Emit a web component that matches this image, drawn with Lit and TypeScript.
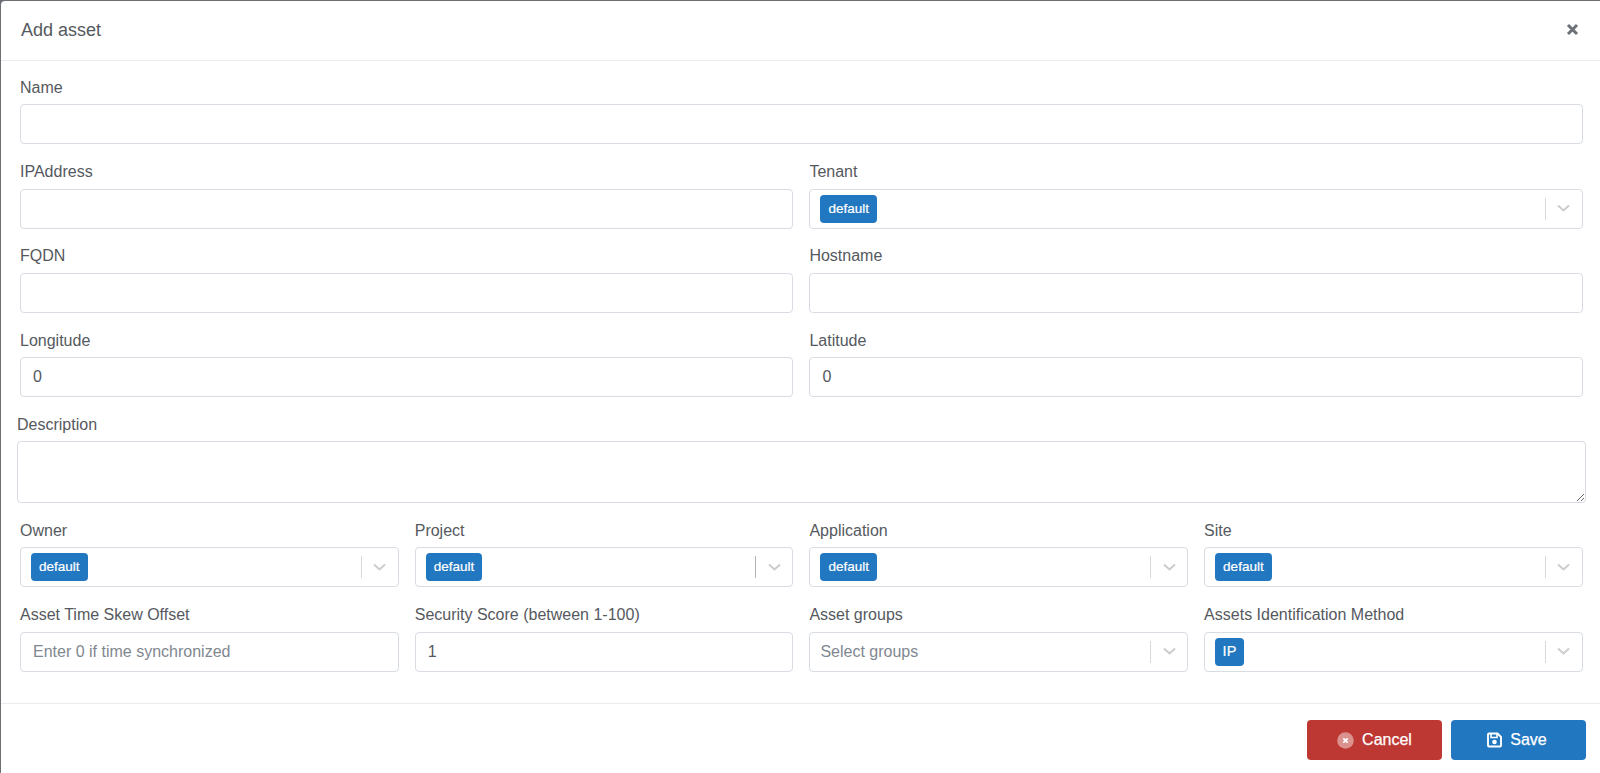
import { LitElement, html, css, svg } from "lit";
import { customElement } from "lit/decorators.js";

const chevron = svg`<path d="M1 1.5l5.5 5 5.5-5" fill="none" stroke="#cccccc" stroke-width="2"/>`;

@customElement("app-root")
export class AppRoot extends LitElement {
  static styles = css`
    :host {
      display: block;
      height: 773px;
      overflow: hidden;
      background: #6b6e72;
      font-family: "Liberation Sans", Arial, sans-serif;
      font-size: 16px;
      color: #55595e;
      box-sizing: border-box;
      padding: 1px 0 0 1px;
    }
    * { box-sizing: border-box; }
    .modal { background: #fff; height: 772px; border-radius: 4px 0 0 0; }
    .header {
      height: 60px;
      border-bottom: 1px solid #e9ecef;
      display: flex;
      align-items: center;
      justify-content: space-between;
      padding: 0 21px 0 20px;
    }
    .title { font-size: 18px; color: #55595e; }
    .close { display: block; width: 13px; height: 13px; margin-top: -2px; }
    .body {
      height: 643px;
      border-bottom: 1px solid #e9ecef;
      padding: 16.4px 17.2px 0 19px;
    }
    .row { display: flex; gap: 16px; height: 84.2px; }
    .row.desc { height: 106.2px; margin: 0 -3px; }
    .field { flex: 1 1 0; min-width: 0; }
    .label { display: block; line-height: 22px; height: 27.4px; margin-top: -0.4px; white-space: nowrap; }
    .control {
      display: block;
      width: 100%;
      height: 40px;
      border: 1px solid #d8dce3;
      border-radius: 4px;
      padding: 0 12px;
      font: inherit;
      color: #55595e;
      background: #fff;
      outline: none;
    }
    .control::placeholder { color: #7f8890; opacity: 1; }
    textarea.control { height: 62px; resize: vertical; }
    .select { display: flex; align-items: center; padding: 0 0 0 10px; }
    .value { flex: 1; min-width: 0; }
    .placeholder { color: #7f8890; }
    .chip {
      display: inline-block;
      height: 28px;
      line-height: 27px;
      padding: 0 8px;
      background: #2277c1;
      border-radius: 4px;
      color: #fff;
      font-size: 13.5px;
      -webkit-text-stroke: 0.2px #fff;
    }
    .ip { font-size: 14.5px; padding: 0 7.5px; }
    .sep { width: 1px; height: 22px; background: #d8d8d8; }
    .sep.dark { width: 1.5px; background: #b4b4b4; }
    .arrow { width: 36px; height: 9px; display: flex; justify-content: center; }
    .arrow svg { width: 13px; height: 9px; display: block; }
    .footer {
      display: flex;
      justify-content: flex-end;
      gap: 9px;
      padding: 16px 14px 0 0;
    }
    .btn {
      width: 135px;
      height: 40px;
      border: 1px solid transparent;
      border-radius: 4px;
      color: #fff;
      font: inherit;
      -webkit-text-stroke: 0.25px #fff;
      display: flex;
      align-items: center;
      justify-content: center;
      gap: 8px;
    }
    .btn svg { display: block; width: 17px; height: 17px; }
    .btn svg.disk { width: 15px; height: 16px; }
    .cancel { background: #bd3832; }
    .save { background: #2277c1; padding: 0 3px 0 0; }
  `;

  private input(label: string, value = "", placeholder = "") {
    return html`<label class="field"><span class="label">${label}</span><input class="control" .value=${value} placeholder=${placeholder} /></label>`;
  }

  private select(label: string, chip: string, dark = false) {
    const content = chip === "IP"
      ? html`<span class="chip ip">IP</span>`
      : chip === "default"
        ? html`<span class="chip">${chip}</span>`
        : html`<span class="placeholder">${chip}</span>`;
    return html`<div class="field"><span class="label">${label}</span>
      <div class="control select">
        <div class="value">${content}</div>
        <span class="sep ${dark ? "dark" : ""}"></span>
        <span class="arrow"><svg viewBox="0 0 13 9">${chevron}</svg></span>
      </div></div>`;
  }

  render() {
    return html`<div class="modal">
      <div class="header">
        <span class="title">Add asset</span>
        <svg class="close" viewBox="0 0 13 13"><path d="M2 2l9 9M11 2l-9 9" stroke="#6d7278" stroke-width="3"/></svg>
      </div>
      <div class="body">
        <div class="row">${this.input("Name")}</div>
        <div class="row">${this.input("IPAddress")}${this.select("Tenant", "default")}</div>
        <div class="row">${this.input("FQDN")}${this.input("Hostname")}</div>
        <div class="row">${this.input("Longitude", "0")}${this.input("Latitude", "0")}</div>
        <div class="row desc"><label class="field"><span class="label">Description</span><textarea class="control"></textarea></label></div>
        <div class="row">
          ${this.select("Owner", "default")}${this.select("Project", "default", true)}${this.select("Application", "default")}${this.select("Site", "default")}
        </div>
        <div class="row">
          ${this.input("Asset Time Skew Offset", "", "Enter 0 if time synchronized")}${this.input("Security Score (between 1-100)", "1")}${this.select("Asset groups", "Select groups")}${this.select("Assets Identification Method", "IP")}
        </div>
      </div>
      <div class="footer">
        <button class="btn cancel">
          <svg viewBox="0 0 17 17"><circle cx="8.5" cy="8.5" r="8.3" fill="#fff" fill-opacity=".45"/><path d="M6.3 6.3l4.4 4.4M10.7 6.3l-4.4 4.4" stroke="#fff" stroke-width="1.8"/></svg>
          Cancel
        </button>
        <button class="btn save">
          <svg class="disk" viewBox="0 0 15 16"><path d="M2 1.5h8.5l3.5 3.5v8.5a1 1 0 0 1-1 1H2a1 1 0 0 1-1-1v-11a1 1 0 0 1 1-1z" fill="none" stroke="#fff" stroke-width="1.9"/><path d="M4 2v3.5h6V2" fill="none" stroke="#fff" stroke-width="1.6"/><circle cx="7.5" cy="10" r="2.3" fill="#fff"/></svg>
          Save
        </button>
      </div>
    </div>`;
  }
}
